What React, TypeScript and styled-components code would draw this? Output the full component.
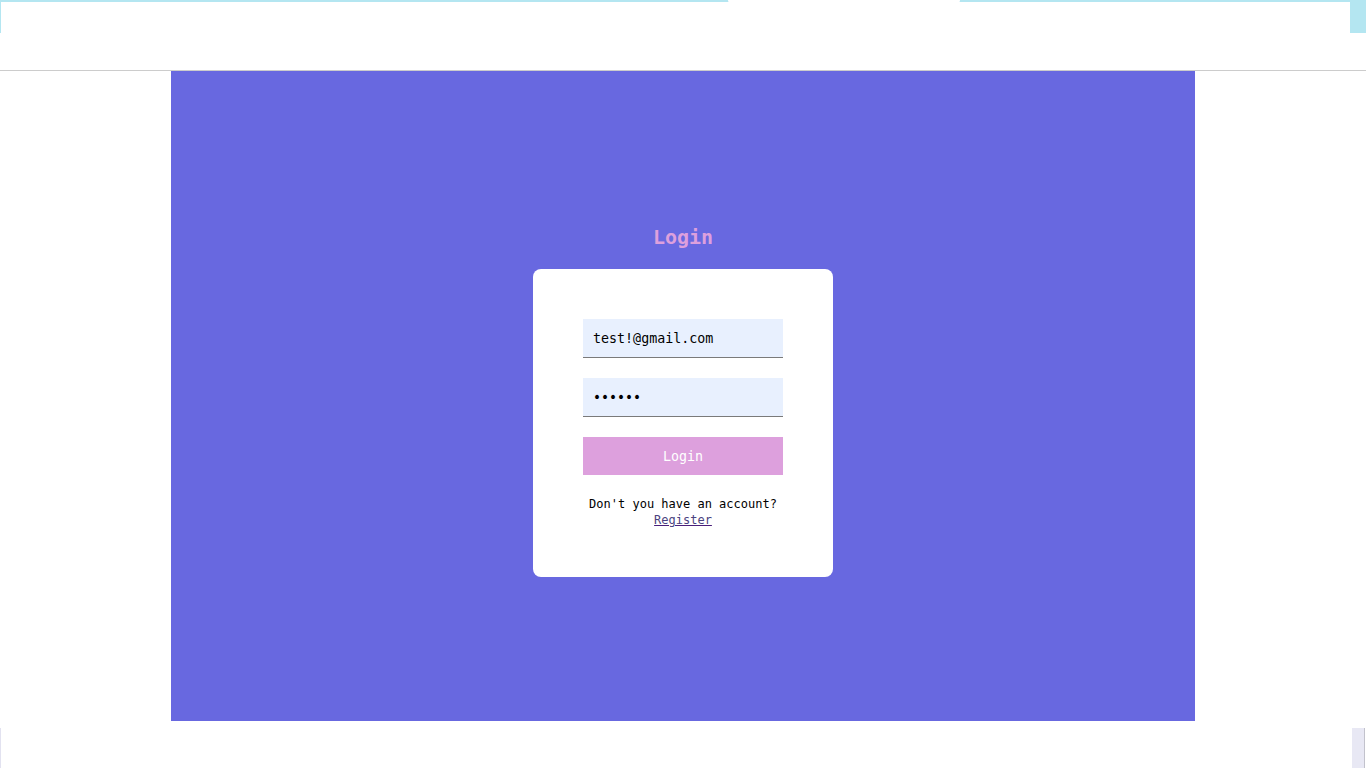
import React from "react";
import styled, { createGlobalStyle } from "styled-components";

const Global = createGlobalStyle`
  html, body { margin: 0; padding: 0; background: #ffffff; }
  body { font-family: "DejaVu Sans Mono", "Liberation Mono", monospace; }
  * { box-sizing: border-box; }
`;

const Page = styled.div`
  width: 1366px;
  height: 768px;
  overflow: hidden;
  display: flex;
  flex-direction: column;
  background: #ffffff;
`;

const Header = styled.header`
  height: 71px;
  border-bottom: 1px solid #cccccc;
  position: relative;
`;

const Frame = styled.div`
  height: 33px;
  border-top: 2px solid #b4e6f1;
  border-left: 1px solid #b4e6f1;
  border-right: 16px solid #b4e6f1;
`;

const Notch = styled.div`
  position: absolute;
  top: 0;
  left: 728px;
  width: 232px;
  height: 3px;
  background: #ffffff;
  border-radius: 0 0 4px 4px;
`;

const Main = styled.main`
  width: 1024px;
  height: 650px;
  margin: 0 auto;
  background: #6868e0;
  display: flex;
  flex-direction: column;
  align-items: center;
  padding-top: 155px;
`;

const Title = styled.h2`
  margin: 0 0 20px;
  font-size: 20px;
  line-height: 23px;
  font-weight: bold;
  color: #dda0dd;
`;

const Card = styled.form`
  width: 300px;
  background: #ffffff;
  border-radius: 8px;
  padding: 50px 50px 49px;
  display: flex;
  flex-direction: column;
  gap: 20px;
`;

const Input = styled.input`
  width: 200px;
  height: 39px;
  border: none;
  border-bottom: 1px solid #7a7a7a;
  background: #e8f0fe;
  padding: 0 10px;
  font-family: "DejaVu Sans Mono", monospace;
  font-size: 13.33px;
  color: #000000;
  outline: none;
`;

const Button = styled.button`
  width: 200px;
  height: 38px;
  border: none;
  background: #dda0dd;
  color: #ffffff;
  font-family: "DejaVu Sans Mono", monospace;
  font-size: 13.33px;
  cursor: pointer;
`;

const Note = styled.p`
  margin: 0;
  padding-top: 1px;
  text-align: center;
  font-size: 12px;
  line-height: 16px;
  color: #000000;
`;

const Link = styled.a`
  color: #4b4380;
  text-decoration: underline;
  text-decoration-color: #4a1f7a;
`;

const Footer = styled.footer`
  margin-top: 7px;
  height: 40px;
  display: flex;
  justify-content: space-between;
  border-left: 1px solid #e2e2f0;
`;

const Scroll = styled.div`
  width: 13px;
  margin-right: 1px;
  background: #e8e8f4;
  border-right: 1px solid #c2c2cc;
  margin-left: auto;
`;

export default function App() {
  return (
    <>
      <Global />
      <Page>
        <Header>
          <Frame />
          <Notch />
        </Header>
        <Main>
          <Title>Login</Title>
          <Card onSubmit={(e) => e.preventDefault()}>
            <Input type="email" defaultValue="test!@gmail.com" />
            <Input type="password" defaultValue="123456" />
            <Button type="submit">Login</Button>
            <Note>
              Don't you have an account?
              <br />
              <Link href="#">Register</Link>
            </Note>
          </Card>
        </Main>
        <Footer>
          <Scroll />
        </Footer>
      </Page>
    </>
  );
}
